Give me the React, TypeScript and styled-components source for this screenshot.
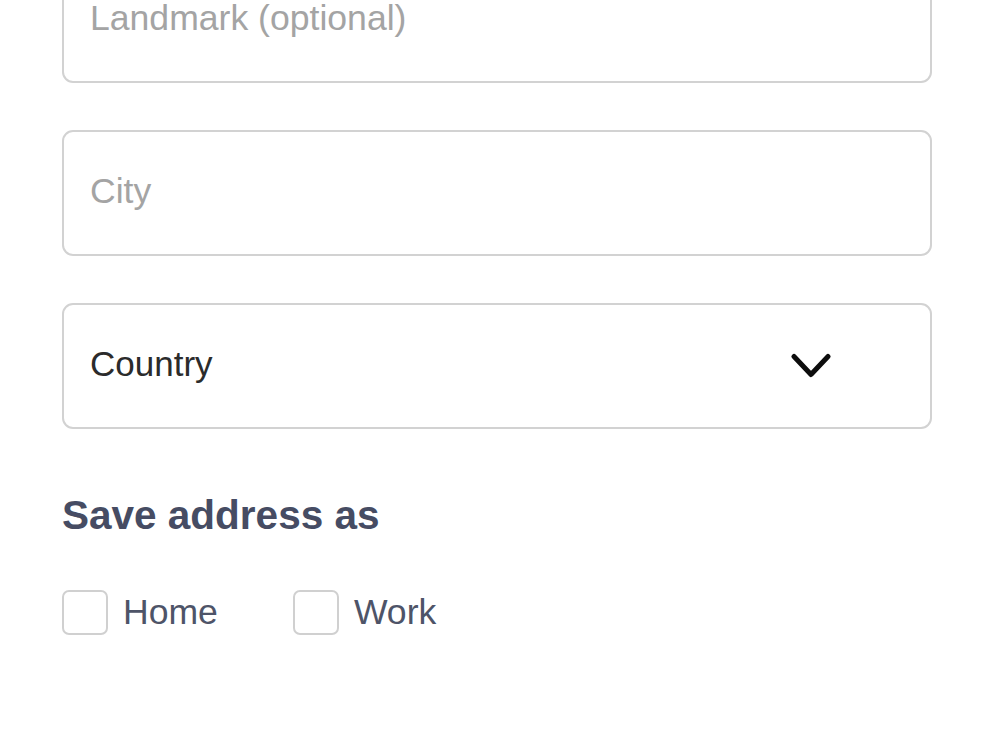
import React, { useState } from 'react';
import styled, { createGlobalStyle } from 'styled-components';

const GlobalStyle = createGlobalStyle`
  html, body {
    margin: 0;
    padding: 0;
    background: #ffffff;
    overflow: hidden;
  }
  body {
    font-family: 'Liberation Sans', Arial, Helvetica, sans-serif;
    -webkit-font-smoothing: antialiased;
  }
`;

const Page = styled.div`
  width: 1000px;
  height: 751px;
  overflow: hidden;
`;

// the form is scrolled, so the first field sits partly above the fold
const Form = styled.form`
  display: flex;
  flex-direction: column;
  width: 870px;
  margin: -43px 0 0 62px;
`;

const Fields = styled.div`
  display: flex;
  flex-direction: column;
  gap: 47px;
`;

const Field = styled.label`
  display: flex;
  align-items: center;
  justify-content: space-between;
  box-sizing: border-box;
  height: 126px;
  padding: 0 99px 4px 26px;
  border: 2px solid #d2d2d2;
  border-radius: 11px;
  background: #ffffff;
`;

const TextInput = styled.input`
  flex: 1;
  min-width: 0;
  border: none;
  outline: none;
  padding: 0;
  background: transparent;
  font-family: inherit;
  font-size: 35.6px;
  color: #2a2a2a;

  &::placeholder {
    color: #a4a4a4;
  }
`;

const SelectValue = styled.span`
  font-size: 35px;
  color: #2b2b2b;
`;

const Chevron = styled.svg`
  margin-top: 4px;
`;

const Heading = styled.h3`
  margin: 63px 0 0;
  font-size: 40.5px;
  line-height: 46px;
  font-weight: 700;
  color: #464c63;
`;

const Options = styled.div`
  display: flex;
  gap: 75px;
  margin-top: 52px;
`;

const Option = styled.label`
  display: flex;
  align-items: center;
  gap: 15px;
  cursor: pointer;
`;

const Box = styled.span<{ $checked: boolean }>`
  box-sizing: border-box;
  width: 46px;
  height: 45px;
  border: 2px solid #d0d0d0;
  border-radius: 7px;
  background: ${({ $checked }) => ($checked ? '#464c63' : '#ffffff')};
`;

const OptionLabel = styled.span`
  font-size: 35.6px;
  color: #4e5468;
`;

const DownArrow = () => (
  <Chevron width="40" height="27" viewBox="0 0 40 27" fill="none">
    <polyline
      points="3,3.5 20,21.5 37,3.5"
      stroke="#0d0d0d"
      strokeWidth="5"
      strokeLinecap="round"
      strokeLinejoin="round"
    />
  </Chevron>
);

type Kind = 'home' | 'work';

export default function App() {
  const [saveAs, setSaveAs] = useState<Kind | null>(null);

  const toggle = (kind: Kind) => setSaveAs((cur) => (cur === kind ? null : kind));

  return (
    <Page>
      <GlobalStyle />
      <Form onSubmit={(e) => e.preventDefault()}>
        <Fields>
          <Field>
            <TextInput placeholder="Landmark (optional)" />
          </Field>
          <Field>
            <TextInput placeholder="City" />
          </Field>
          <Field>
            <SelectValue>Country</SelectValue>
            <DownArrow />
          </Field>
        </Fields>

        <Heading>Save address as</Heading>

        <Options>
          <Option onClick={() => toggle('home')}>
            <Box $checked={saveAs === 'home'} />
            <OptionLabel>Home</OptionLabel>
          </Option>
          <Option onClick={() => toggle('work')}>
            <Box $checked={saveAs === 'work'} />
            <OptionLabel>Work</OptionLabel>
          </Option>
        </Options>
      </Form>
    </Page>
  );
}
